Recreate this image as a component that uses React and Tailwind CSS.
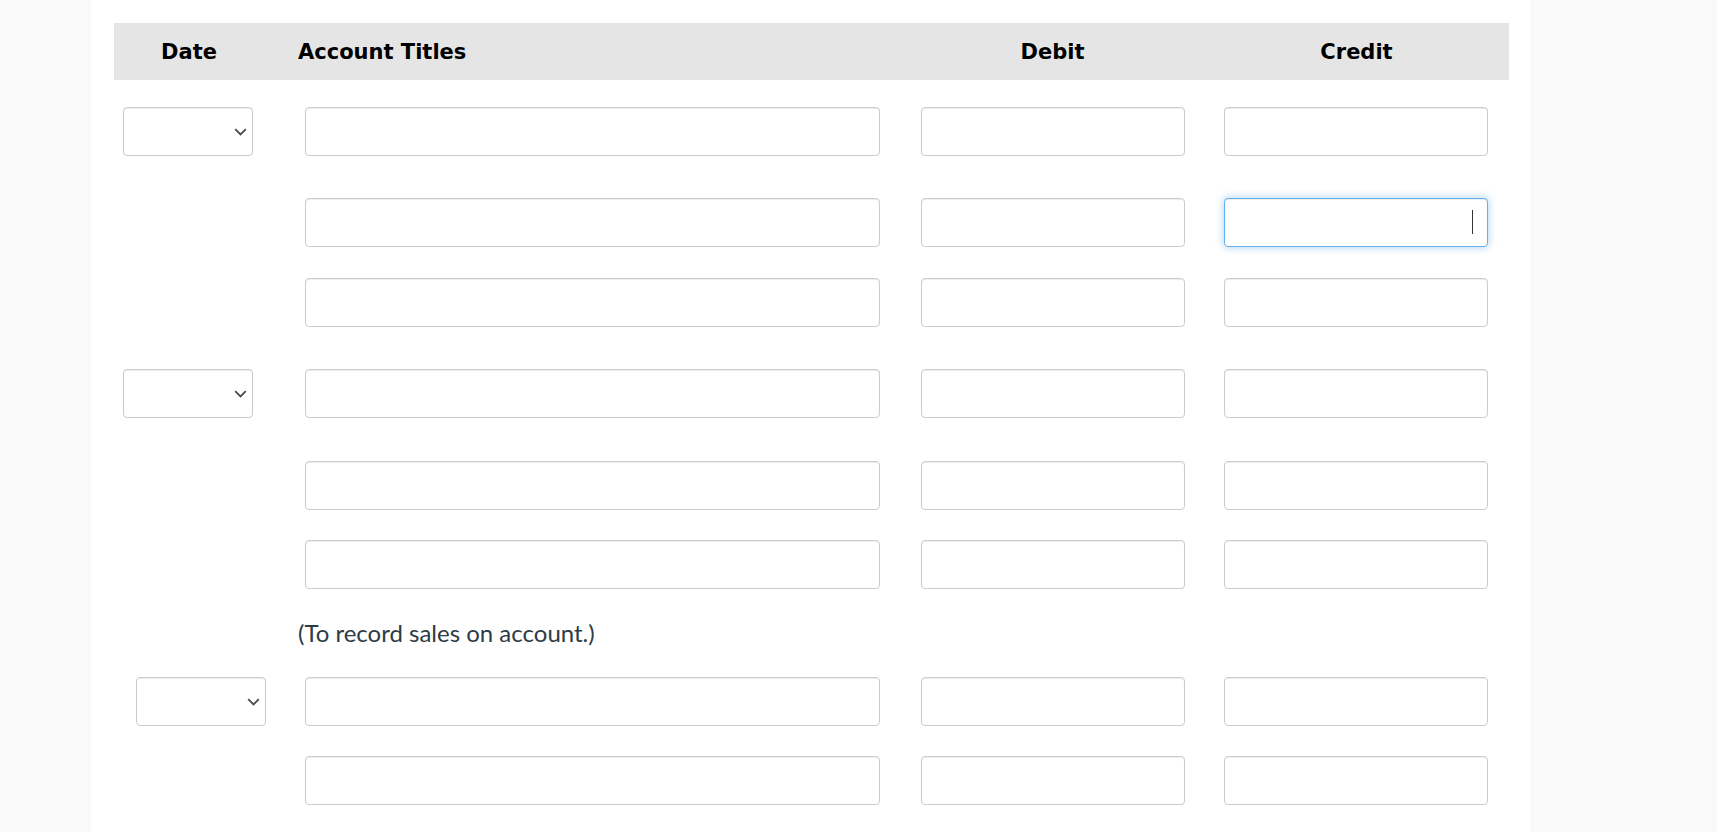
import React from "react";

const inputCls =
  "block h-[49px] bg-white border border-[#cccccc] rounded-[4px] shadow-[inset_0_1px_1px_rgba(0,0,0,0.075)] outline-none";

function DateSelect({ offset }) {
  return (
    <div className={`relative h-[49px] w-[130px] ${offset}`}>
      <select className="h-[49px] w-[130px] appearance-none bg-white border border-[#cccccc] rounded-[4px] shadow-[inset_0_1px_1px_rgba(0,0,0,0.075)] outline-none">
        <option value=""></option>
      </select>
      <svg
        className="pointer-events-none absolute right-[6px] top-[21px]"
        width="13"
        height="8"
        viewBox="0 0 13 8"
        fill="none"
      >
        <path d="M1.2 1.2 L6.5 6.4 L11.8 1.2" stroke="#4a4a4a" strokeWidth="1.8" />
      </svg>
    </div>
  );
}

function Row({ mt, date, dateOffset = "ml-[9px]", focused }) {
  return (
    <div className={`grid grid-cols-[150px_637px_303px_305px] ${mt}`}>
      <div>{date ? <DateSelect offset={dateOffset} /> : null}</div>
      <div>
        <input type="text" className={`${inputCls} ml-[41px] w-[575px]`} />
      </div>
      <div>
        <input type="text" className={`${inputCls} ml-[20px] w-[264px] text-right`} />
      </div>
      <div>
        {focused ? (
          <div className="relative ml-[20px] w-[264px]">
            <input
              type="text"
              className="block h-[49px] w-[264px] bg-white border border-[#66afe9] rounded-[4px] shadow-[inset_0_1px_1px_rgba(0,0,0,0.075),0_0_8px_rgba(102,175,233,0.6)] outline-none text-right"
            />
            <span className="absolute left-[248px] top-[12px] h-[24px] w-px bg-[#333333]" />
          </div>
        ) : (
          <input type="text" className={`${inputCls} ml-[20px] w-[264px] text-right`} />
        )}
      </div>
    </div>
  );
}

export default function App() {
  return (
    <div className="min-h-[832px] w-[1717px] bg-[#f9f9f9]">
      <div className="ml-[91px] min-h-[832px] w-[1439px] bg-white pl-[23px] pr-[21px] pt-[23px]">
        <div
          className="grid h-[57px] grid-cols-[150px_637px_303px_305px] bg-[#e5e5e5] pt-[3px] text-[21px] font-bold text-black"
          style={{ fontFamily: '"DejaVu Sans", Verdana, sans-serif' }}
        >
          <div className="flex items-center justify-center">Date</div>
          <div className="flex items-center pl-[34px]">Account Titles</div>
          <div className="flex items-center justify-center">Debit</div>
          <div className="flex items-center justify-center">Credit</div>
        </div>

        <Row mt="mt-[27px]" date />
        <Row mt="mt-[42px]" focused />
        <Row mt="mt-[31px]" />
        <Row mt="mt-[42px]" date />
        <Row mt="mt-[43px]" />
        <Row mt="mt-[30px]" />

        <div className="mt-[28px] grid grid-cols-[150px_637px_303px_305px]">
          <div />
          <div
            className="pl-[34px] text-[24px] leading-[32px] text-[#2d3b45]"
            style={{ fontFamily: "Lato, sans-serif" }}
          >
            (To record sales on account.)
          </div>
        </div>

        <Row mt="mt-[28px]" date dateOffset="ml-[22px]" />
        <Row mt="mt-[30px]" />
      </div>
    </div>
  );
}
